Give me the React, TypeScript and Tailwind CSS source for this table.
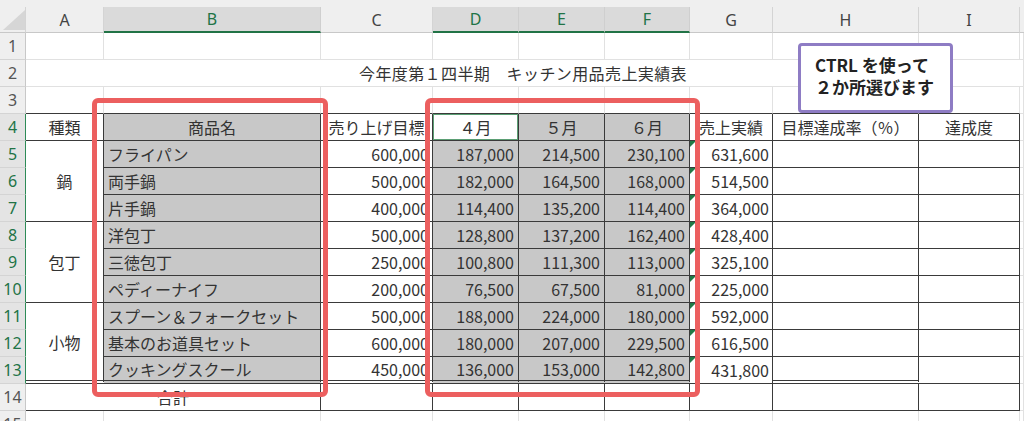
import React from "react";

const JP = "font-['Noto_Sans_CJK_JP',sans-serif]";
const HDR = "font-['Noto_Sans','Liberation_Sans',sans-serif]";

const products: [string, string, string, string, string, string][] = [
  ["フライパン", "600,000", "187,000", "214,500", "230,100", "631,600"],
  ["両手鍋", "500,000", "182,000", "164,500", "168,000", "514,500"],
  ["片手鍋", "400,000", "114,400", "135,200", "114,400", "364,000"],
  ["洋包丁", "500,000", "128,800", "137,200", "162,400", "428,400"],
  ["三徳包丁", "250,000", "100,800", "111,300", "113,000", "325,100"],
  ["ペディーナイフ", "200,000", "76,500", "67,500", "81,000", "225,000"],
  ["スプーン＆フォークセット", "500,000", "188,000", "224,000", "180,000", "592,000"],
  ["基本のお道具セット", "600,000", "180,000", "207,000", "229,500", "616,500"],
  ["クッキングスクール", "450,000", "136,000", "153,000", "142,800", "431,800"],
];

const groups: Record<number, string> = { 0: "鍋", 3: "包丁", 6: "小物" };

const letters = ["A", "B", "C", "D", "E", "F", "G", "H", "I"];
const selectedCols = ["B", "D", "E", "F"];

function RowHead({ n }: { n: number }) {
  const sel = n >= 4 && n <= 13;
  return (
    <div
      className={
        sel
          ? `${HDR} flex items-center justify-center bg-[#e4e4e4] text-[#217346] text-[16px] border-b border-b-[#d4d4d4] border-r border-r-[#2e8b57]`
          : `${HDR} flex items-center justify-center bg-[#efefef] text-[#555] text-[16px] border-b border-b-[#d4d4d4] border-r border-r-[#c8c8c8]`
      }
    >
      {n}
    </div>
  );
}

const light = "border-r border-b border-[#e1e1e1]";
const dark = "border-r border-b border-[#3a3a3a]";

function Triangle() {
  return (
    <svg className="absolute left-0 top-0" width="6" height="6" viewBox="0 0 6 6">
      <polygon points="0,0 6,0 0,6" fill="#1f7a46" />
    </svg>
  );
}

export default function App() {
  return (
    <div className="relative w-[1024px] h-[421px] overflow-hidden bg-white">
      <div className="grid grid-cols-[26px_78px_217px_112px_86px_86px_85px_83px_146px_101px_1fr] grid-rows-[7px_26px_repeat(15,27px)]">
        {/* top strip */}
        <div className="col-span-11 bg-[#efefef]" />
        {/* column header row */}
        <div className="relative bg-[#efefef] border-b border-[#c8c8c8] border-r border-r-[#d4d4d4]">
          <svg className="absolute left-[3px] top-[3px]" width="22" height="20" viewBox="0 0 22 20">
            <polygon points="22,0 22,20 0,20" fill="#d6d6d6" />
          </svg>
        </div>
        {letters.map((l) =>
          selectedCols.includes(l) ? (
            <div
              key={l}
              className={`${HDR} flex items-center justify-center bg-[#dadada] text-[#217346] text-[16px] border-r border-r-[#cfcfcf] border-b-2 border-b-[#217346]`}
            >
              {l}
            </div>
          ) : (
            <div
              key={l}
              className={`${HDR} flex items-center justify-center bg-[#efefef] text-[#444] text-[16px] border-r border-r-[#d4d4d4] border-b border-b-[#c8c8c8]`}
            >
              {l}
            </div>
          )
        )}
        <div className="bg-[#efefef] border-b border-[#c8c8c8]" />

        {/* Row 1 */}
        <RowHead n={1} />
        {letters.map((l) => (
          <div key={l} className={light} />
        ))}
        <div className={light} />

        {/* Row 2 */}
        <RowHead n={2} />
        <div className={`${JP} col-span-9 flex items-center justify-center text-[16px] text-[#333] tracking-[0.4px] border-b border-[#e1e1e1]`}>
          今年度第１四半期　キッチン用品売上実績表
        </div>
        <div className={light} />

        {/* Row 3 */}
        <RowHead n={3} />
        {letters.map((l) => (
          <div key={l} className="border-r border-r-[#e1e1e1] border-b border-b-[#3a3a3a]" />
        ))}
        <div className={light} />

        {/* Row 4 header */}
        <RowHead n={4} />
        <div className={`${JP} ${dark} flex items-center justify-center text-[16px] text-[#333]`}>種類</div>
        <div className={`${JP} ${dark} bg-[#c8c8c8] flex items-center justify-center text-[16px] text-[#333]`}>商品名</div>
        <div className={`${JP} ${dark} flex items-center justify-center text-[16px] text-[#333] overflow-hidden whitespace-nowrap`}>売り上げ目標</div>
        <div className={`${dark} bg-white p-[0px]`}>
          <div className={`${JP} h-full w-full border border-[#5b9f74] flex items-center justify-center text-[16px] text-[#333]`}>４月</div>
        </div>
        <div className={`${JP} ${dark} bg-[#c8c8c8] flex items-center justify-center text-[16px] text-[#333]`}>５月</div>
        <div className={`${JP} ${dark} bg-[#c8c8c8] flex items-center justify-center text-[16px] text-[#333]`}>６月</div>
        <div className={`${JP} ${dark} flex items-center justify-center text-[16px] text-[#333] whitespace-nowrap overflow-hidden`}>売上実績</div>
        <div className={`${JP} ${dark} flex items-center justify-center text-[16px] text-[#333] whitespace-nowrap`}>目標達成率（％）</div>
        <div className={`${JP} ${dark} flex items-center justify-center text-[16px] text-[#333]`}>達成度</div>
        <div className={light} />

        {/* Rows 5-13 */}
        {products.map((p, i) => {
          const last = i === products.length - 1;
          const bb = last ? "border-r border-[#3a3a3a] border-b-4 border-double" : dark;
          return (
            <React.Fragment key={i}>
              <RowHead n={i + 5} />
              {groups[i] !== undefined && (
                <div
                  className={`${JP} row-span-3 flex items-center justify-center text-[16px] text-[#333] ${
                    i === 6 ? "border-r border-[#3a3a3a] border-b-4 border-double" : dark
                  }`}
                >
                  {groups[i]}
                </div>
              )}
              <div className={`${JP} ${bb} bg-[#c8c8c8] flex items-center pl-[4px] text-[16px] text-[#333] whitespace-nowrap`}>{p[0]}</div>
              <div className={`${JP} ${bb} flex items-center justify-end pr-[3px] text-[16px] text-[#333]`}>{p[1]}</div>
              <div className={`${JP} ${bb} bg-[#c8c8c8] flex items-center justify-end pr-[4px] text-[16px] text-[#333]`}>{p[2]}</div>
              <div className={`${JP} ${bb} bg-[#c8c8c8] flex items-center justify-end pr-[4px] text-[16px] text-[#333]`}>{p[3]}</div>
              <div className={`${JP} ${bb} bg-[#c8c8c8] flex items-center justify-end pr-[4px] text-[16px] text-[#333]`}>{p[4]}</div>
              <div className={`${JP} ${dark} relative flex items-center justify-end pr-[3px] text-[16px] text-[#333]`}>
                <Triangle />
                {p[5]}
              </div>
              <div className={last ? "border-r border-[#3a3a3a] border-b-4 border-double" : dark} />
              <div className={dark} />
              <div className={light} />
            </React.Fragment>
          );
        })}

        {/* Row 14 */}
        <RowHead n={14} />
        <div className={`${JP} ${dark} col-span-2 flex items-center justify-center text-[16px] text-[#333]`}>合計</div>
        <div className={dark} />
        <div className={dark} />
        <div className={dark} />
        <div className={dark} />
        <div className={dark} />
        <div className={dark} />
        <div className={dark} />
        <div className={light} />

        {/* Row 15 */}
        <RowHead n={15} />
        {letters.map((l) => (
          <div key={l} className={light} />
        ))}
        <div className={light} />
      </div>

      {/* red selection frames */}
      <div className="absolute left-[92px] top-[98px] w-[236px] h-[299px] border-[5px] border-[#ec5f5f] rounded-[6px]" />
      <div className="absolute left-[425px] top-[98px] w-[275px] h-[299px] border-[5px] border-[#ec5f5f] rounded-[6px]" />

      {/* callout */}
      <div className="absolute left-[798px] top-[43px] w-[155px] h-[70px] border-[3px] border-[#8e7cc4] rounded-[4px] bg-white pl-[14px] pt-[8px]">
        <div className={`${JP} font-bold text-[17px] leading-[22px] text-[#222] whitespace-nowrap`}>CTRL を使って</div>
        <div className={`${JP} font-bold text-[17px] leading-[22px] text-[#222] whitespace-nowrap`}>２か所選びます</div>
      </div>
    </div>
  );
}
